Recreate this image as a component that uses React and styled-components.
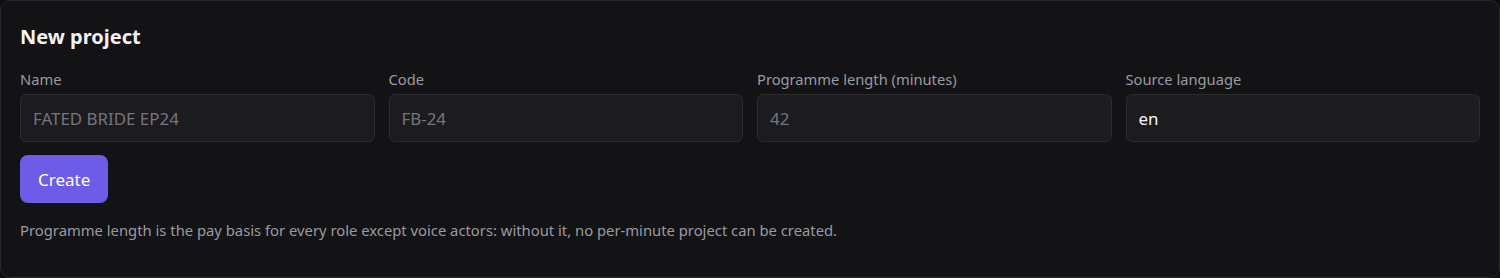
import React from "react";
import styled, { createGlobalStyle } from "styled-components";

const GlobalStyle = createGlobalStyle`
  html, body {
    margin: 0;
    padding: 0;
    background: #0e0e10;
  }
  * {
    box-sizing: border-box;
  }
`;

const fields = [
  { label: "Name", placeholder: "FATED BRIDE EP24" },
  { label: "Code", placeholder: "FB-24" },
  { label: "Programme length (minutes)", placeholder: "42" },
  { label: "Source language", value: "en" },
];

const App = () => {
  return (
    <>
      <GlobalStyle />
      <Card>
        <Title>New project</Title>
        <FieldGrid>
          {fields.map((f) => (
            <Field key={f.label}>
              <Label>{f.label}</Label>
              <Input
                placeholder={f.placeholder}
                defaultValue={f.value}
                readOnly
              />
            </Field>
          ))}
        </FieldGrid>
        <Button>Create</Button>
        <Hint>
          Programme length is the pay basis for every role except voice actors:
          without it, no per-minute project can be created.
        </Hint>
      </Card>
    </>
  );
};

const Card = styled.div`
  width: 1500px;
  height: 278px;
  background: #131215;
  border: 1px solid #2a2a2f;
  border-radius: 10px;
  padding: 22px 19px 0 19px;
  font-family: "Noto Sans", "Open Sans", sans-serif;
  display: flex;
  flex-direction: column;
  align-items: flex-start;
`;

const Title = styled.h2`
  margin: 0;
  font-size: 20px;
  font-weight: 700;
  color: #f2f2f4;
  line-height: 27px;
`;

const FieldGrid = styled.div`
  width: 100%;
  display: grid;
  grid-template-columns: repeat(4, 1fr);
  gap: 14px;
  margin-top: 20px;
`;

const Field = styled.div`
  display: flex;
  flex-direction: column;
  gap: 5px;
`;

const Label = styled.label`
  font-size: 14.7px;
  color: #9b9aa2;
  line-height: 19px;
`;

const Input = styled.input`
  height: 48px;
  width: 100%;
  background: #1c1b20;
  border: 1px solid #2c2b31;
  border-radius: 6px;
  padding: 0 12px;
  font-family: inherit;
  font-size: 16.9px;
  color: #f4f4f6;
  outline: none;

  &::placeholder {
    color: #76757c;
  }
`;

const Button = styled.button`
  margin-top: 13px;
  height: 48px;
  padding: 0 18px;
  background: #6c5ce7;
  border: none;
  border-radius: 8px;
  color: #ffffff;
  font-family: inherit;
  font-size: 17px;
  cursor: pointer;
`;

const Hint = styled.p`
  margin: 18px 0 0 0;
  font-size: 14.8px;
  color: #9b9aa2;
  line-height: 19px;
`;

export default App;
